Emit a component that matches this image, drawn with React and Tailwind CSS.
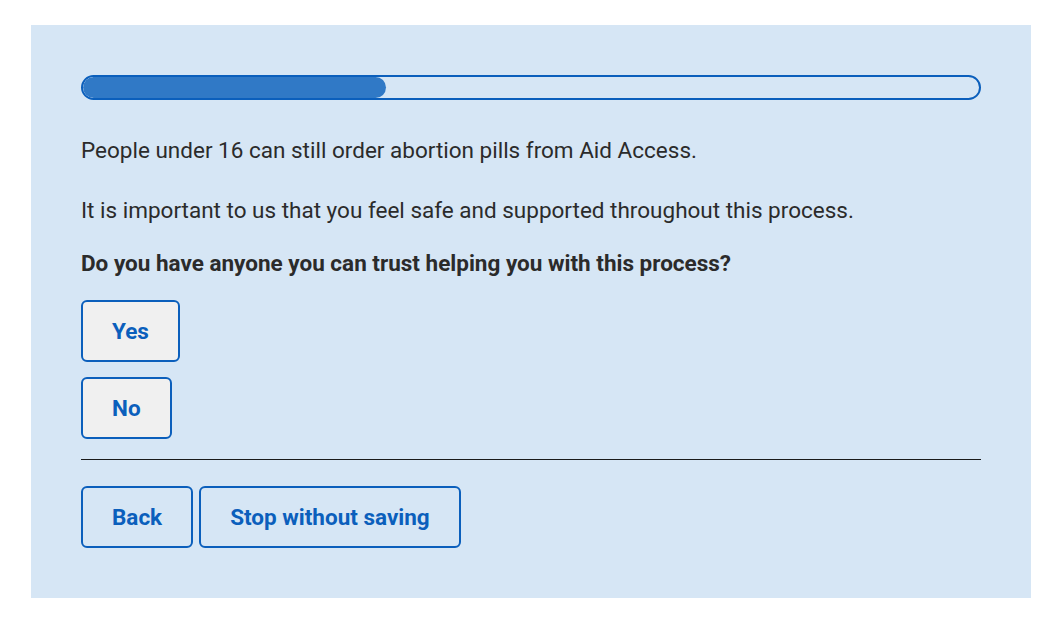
export default function App() {
  const btn =
    "h-[62px] px-[29px] rounded-[6px] border-2 border-[#0b5fbc] text-[#0b5fbc] font-bold text-[22.5px] leading-none";
  return (
    <div className="bg-white min-h-[627px] pt-[25px] px-[31px]" style={{ fontFamily: "Roboto, 'Noto Sans', sans-serif" }}>
      <div className="bg-[#d6e6f5] h-[573px] px-[50px] pt-[50px] text-[#2b2b2b]">
        <div className="h-[25px] rounded-full border-2 border-[#0b5fbc] bg-[#d6e6f5] overflow-hidden">
          <div className="h-full w-[303px] rounded-full bg-[#3079c6]"></div>
        </div>
        <p className="mt-[35px] text-[22.5px] leading-[30px]">People under 16 can still order abortion pills from Aid Access.</p>
        <p className="mt-[30px] text-[22.5px] leading-[30px]">It is important to us that you feel safe and supported throughout this process.</p>
        <p className="mt-[23px] text-[22.5px] leading-[30px] font-bold">Do you have anyone you can trust helping you with this process?</p>
        <div className="mt-[22px] flex flex-col items-start gap-[15px]">
          <button className={btn + " bg-[#f0f0f0]"}>Yes</button>
          <button className={btn + " bg-[#f0f0f0]"}>No</button>
        </div>
        <div className="mt-[20px] h-px bg-[#1a1a1a]"></div>
        <div className="mt-[26px] flex gap-[6px]">
          <button className={btn}>Back</button>
          <button className={btn}>Stop without saving</button>
        </div>
      </div>
    </div>
  );
}
